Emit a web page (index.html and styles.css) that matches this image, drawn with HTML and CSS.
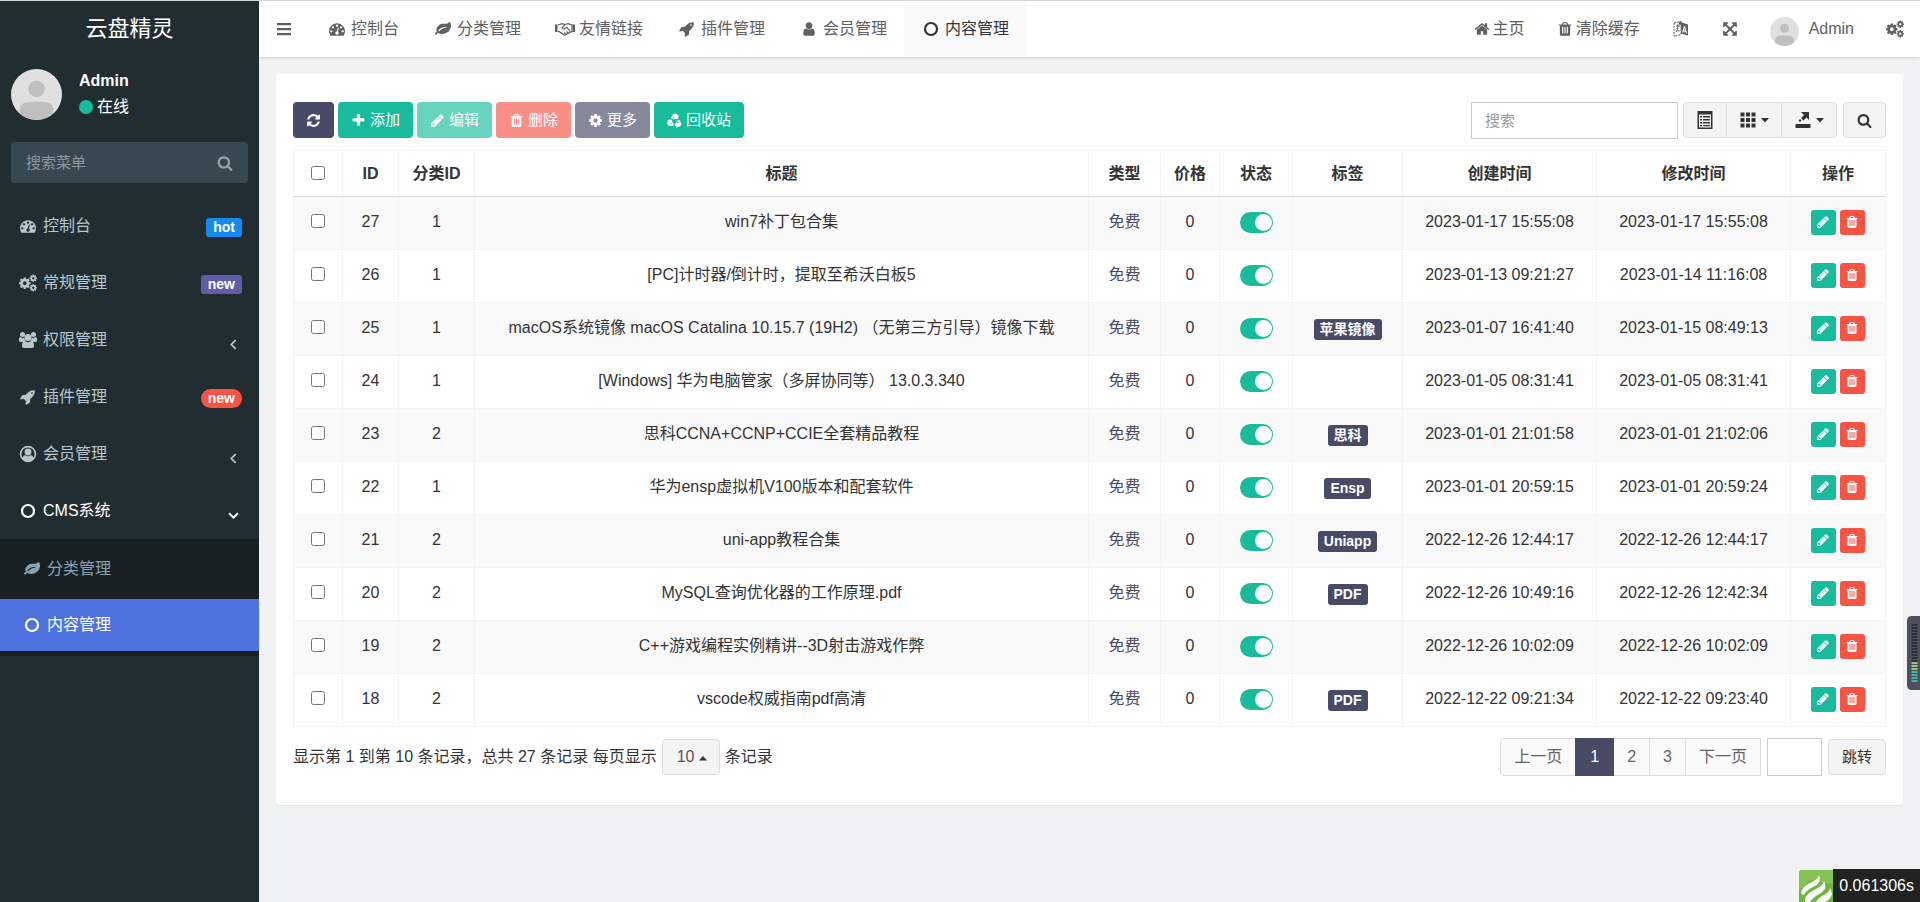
FILE: index.html
```html
<!DOCTYPE html>
<html lang="zh-CN">
<head>
<meta charset="utf-8">
<title>云盘精灵 - 内容管理</title>
<link rel="stylesheet" href="styles.css">
</head>
<body>
<svg class="sprite" aria-hidden="true">
  <symbol id="dash" viewBox="0 0 1792 1792"><path d="M384 1152q0-53-37.500-90.500t-90.500-37.500-90.500 37.500-37.500 90.500 37.500 90.500 90.500 37.500 90.500-37.500 37.500-90.500zm192-448q0-53-37.500-90.500t-90.500-37.500-90.500 37.500-37.500 90.500 37.500 90.500 90.500 37.500 90.500-37.500 37.500-90.500zm428 481l101-382q6-26-7.500-48.500t-38.500-29.500-48 6.500-30 39.500l-101 382q-60 5-107 43.500t-63 98.500q-20 77 20 146t117 89 146-20 89-117q16-60-6-117t-72-91zm660-33q0-53-37.500-90.500t-90.500-37.500-90.500 37.500-37.500 90.500 37.500 90.500 90.500 37.500 90.500-37.500 37.500-90.500zm-640-640q0-53-37.500-90.500t-90.500-37.500-90.500 37.500-37.500 90.500 37.500 90.500 90.500 37.500 90.500-37.500 37.500-90.500zm448 192q0-53-37.500-90.500t-90.500-37.500-90.500 37.500-37.500 90.500 37.500 90.500 90.500 37.500 90.500-37.500 37.500-90.500zm320 448q0 261-141 483-19 29-54 29h-1402q-35 0-54-29-141-221-141-483 0-182 71-348t191-286 286-191 348-71 348 71 286 191 191 286 71 348z"/></symbol>
  <symbol id="leaf" viewBox="0 0 1792 1792"><path d="M1280 704q0-26-19-45t-45-19q-172 0-318 49.500t-259.500 134-235.500 219.500q-19 21-19 45 0 26 19 45t45 19q24 0 45-19 27-24 74-71t67-66q137-124 268.500-176t313.500-52q26 0 45-19t19-45zm512-198q0 95-20 193-46 224-184.500 383t-357.500 268q-214 108-438 108-148 0-286-47-15-5-88-42t-96-37q-16 0-39.500 32t-45 70-52.500 70-60 32q-43 0-63.500-17.500t-45.500-59.500q-2-4-6-11t-5.500-10-3-9.500-1.500-13.500q0-35 31-73.500t68-65.500 68-56 31-48q0-4-14-38t-16-44q-9-51-9-104 0-115 43.500-220t119-184.500 170.500-139 204-95.500q55-18 145-25.500t179.500-9 178.500-6 163.500-24 113.500-56.500l29.500-29.500 29.500-28 27-20 36.500-16 43.500-4.500q39 0 70.500 46t47.500 112 24 124 8 96z"/></symbol>
  <symbol id="rocket" viewBox="0 0 1792 1792"><path d="M1440 448q0-40-28-68t-68-28-68 28-28 68 28 68 68 28 68-28 28-68zm224-288q0 249-75.500 430.500t-253.500 360.500q-81 80-195 176l-20 379q-2 16-16 26l-384 224q-7 4-16 4-12 0-23-9l-64-64q-13-14-8-32l85-276-281-281-276 85q-3 1-9 1-14 0-23-9l-64-64q-17-19-5-39l224-384q10-14 26-16l379-20q96-114 176-195 188-187 358-258t431-71q14 0 24 9.500t10 22.500z"/></symbol>
  <symbol id="user" viewBox="0 0 1792 1792"><path d="M1536 1399q0 109-62.500 187t-150.500 78h-854q-88 0-150.500-78t-62.500-187q0-85 8.500-160.500t31.500-152 58.500-131 94-89 134.500-34.500q131 128 313 128t313-128q76 0 134.500 34.500t94 89 58.500 131 31.500 152 8.500 160.500zm-256-887q0 159-112.500 271.500t-271.500 112.500-271.500-112.500-112.500-271.500 112.500-271.500 271.500-112.500 271.500 112.500 112.500 271.500z"/></symbol>
  <symbol id="home" viewBox="0 0 1792 1792"><path d="M1472 992v480q0 26-19 45t-45 19h-384v-384h-256v384h-384q-26 0-45-19t-19-45v-480q0-1 .5-3t.5-3l575-474 575 474q1 2 1 6zm223-69l-62 74q-8 9-21 11h-3q-13 0-21-7l-692-577-692 577q-12 8-24 7-13-2-21-11l-62-74q-8-10-7-23.500t11-21.500l719-599q32-26 76-26t76 26l244 204v-195q0-14 9-23t23-9h192q14 0 23 9t9 23v408l219 182q10 8 11 21.500t-7 23.500z"/></symbol>
  <symbol id="trash" viewBox="0 0 1792 1792"><path d="M704 1376v-704q0-14-9-23t-23-9h-64q-14 0-23 9t-9 23v704q0 14 9 23t23 9h64q14 0 23-9t9-23zm256 0v-704q0-14-9-23t-23-9h-64q-14 0-23 9t-9 23v704q0 14 9 23t23 9h64q14 0 23-9t9-23zm256 0v-704q0-14-9-23t-23-9h-64q-14 0-23 9t-9 23v704q0 14 9 23t23 9h64q14 0 23-9t9-23zm-544-992h448l-48-117q-7-9-17-11h-317q-10 2-17 11zm928 32v64q0 14-9 23t-23 9h-96v948q0 83-47 143.500t-113 60.500h-832q-66 0-113-58.500t-47-141.500v-952h-96q-14 0-23-9t-9-23v-64q0-14 9-23t23-9h309l70-167q15-37 54-63t79-26h320q40 0 79 26t54 63l70 167h309q14 0 23 9t9 23z"/></symbol>
  <symbol id="search" viewBox="0 0 1792 1792"><path d="M1216 832q0-185-131.500-316.500t-316.500-131.500-316.500 131.500-131.500 316.500 131.500 316.500 316.500 131.500 316.500-131.500 131.500-316.500zm512 832q0 52-38 90t-90 38q-54 0-90-38l-343-342q-179 124-399 124-143 0-273.500-55.500t-225-150-150-225-55.500-273.500 55.500-273.500 150-225 225-150 273.500-55.500 273.500 55.500 225 150 150 225 55.500 273.500q0 220-124 399l343 343q37 37 37 90z"/></symbol>
  <symbol id="cog" viewBox="0 0 1792 1792"><path d="M1152 896q0-106-75-181t-181-75-181 75-75 181 75 181 181 75 181-75 75-181zm512-109v222q0 12-8 23t-20 13l-185 28q-19 54-39 91 35 50 107 138 10 12 10 25t-9 23q-27 37-99 108t-94 71q-12 0-26-9l-138-108q-44 23-91 38-16 136-29 186-7 28-36 28h-222q-14 0-24.500-8.500t-11.500-21.500l-28-184q-49-16-90-37l-141 107q-10 9-25 9-14 0-25-11-126-114-165-168-7-10-7-23 0-12 8-23 15-21 51-66.500t54-70.500q-27-50-41-99l-183-27q-13-2-21-12.500t-8-23.500v-222q0-12 8-23t19-13l186-28q14-46 39-92-40-57-107-138-10-12-10-24 0-10 9-23 26-36 98.500-107.500t94.500-71.500q13 0 26 10l138 107q44-23 91-38 16-136 29-186 7-28 36-28h222q14 0 24.500 8.500t11.500 21.500l28 184q49 16 90 37l142-107q9-9 24-9 13 0 25 10 129 119 165 170 7 8 7 22 0 12-8 23-15 21-51 66.500t-54 70.500q26 50 41 98l183 28q13 2 21 12.500t8 23.500z"/></symbol>
  <symbol id="cogs" viewBox="0 0 18 18"><use href="#cog" x="-1" y="2.500" width="13.500" height="13.500"/><use href="#cog" x="10" y="0" width="8.500" height="8.500"/><use href="#cog" x="10" y="9.500" width="8.500" height="8.500"/></symbol>
  <symbol id="refresh" viewBox="0 0 1792 1792"><path d="M1639 1056q0 5-1 7-64 268-268 434.500t-478 166.500q-146 0-282.500-55t-243.500-157l-129 129q-19 19-45 19t-45-19-19-45v-448q0-26 19-45t45-19h448q26 0 45 19t19 45-19 45l-137 137q71 66 161 102t187 36q134 0 250-65t186-179q11-17 53-117 8-23 30-23h192q13 0 22.500 9.500t9.500 22.500zm25-800v448q0 26-19 45t-45 19h-448q-26 0-45-19t-19-45 19-45l138-138q-148-137-349-137-134 0-250 65t-186 179q-11 17-53 117-8 23-30 23h-199q-13 0-22.500-9.500t-9.500-22.500v-7q65-268 270-434.500t480-166.500q146 0 284 55.500t245 156.500l130-129q19-19 45-19t45 19 19 45z"/></symbol>
  <symbol id="plus" viewBox="0 0 1792 1792"><path d="M1600 736v192q0 40-28 68t-68 28h-416v416q0 40-28 68t-68 28h-192q-40 0-68-28t-28-68v-416h-416q-40 0-68-28t-28-68v-192q0-40 28-68t68-28h416v-416q0-40 28-68t68-28h192q40 0 68 28t28 68v416h416q40 0 68 28t28 68z"/></symbol>
  <symbol id="pencil" viewBox="0 0 1792 1792"><path d="M491 1536l91-91-235-235-91 91v107h128v128h107zm523-928q0-22-22-22-10 0-17 7l-542 542q-7 7-7 17 0 22 22 22 10 0 17-7l542-542q7-7 7-17zm-54-192l416 416-832 832h-416v-416zm683 96q0 53-37 90l-166 166-416-416 166-165q36-38 90-38 53 0 91 38l235 234q37 39 37 91z"/></symbol>
  <symbol id="expand" viewBox="0 0 1792 1792"><path d="M1411 541l-355 355 355 355 144-144q29-31 70-14 39 17 39 59v448q0 26-19 45t-45 19h-448q-42 0-59-40-17-39 14-69l144-144-355-355-355 355 144 144q31 30 14 69-17 40-59 40h-448q-26 0-45-19t-19-45v-448q0-42 40-59 39-17 69 14l144 144 355-355-355-355-144 144q-19 19-45 19-12 0-24-5-40-17-40-59v-448q0-26 19-45t45-19h448q42 0 59 40 17 39-14 69l-144 144 355 355 355-355-144-144q-31-30-14-69 17-40 59-40h448q26 0 45 19t19 45v448q0 42-39 59-13 5-25 5-26 0-45-19z"/></symbol>
  <symbol id="ring" viewBox="0 0 18 18"><circle cx="9" cy="9" r="6" fill="none" stroke="currentColor" stroke-width="2.200"/></symbol>
  <symbol id="bars" viewBox="0 0 18 18"><path d="M2 3h14v2.200H2zM2 8h14v2.200H2zM2 13h14v2.200H2z"/></symbol>
  <symbol id="hands" viewBox="0 0 22 18"><path d="M1 4.500h2.500v7.500H1zM18.500 4.500H21v7.500h-2.500z"/><path d="M4 5l4-1.300 3 .8 3-.8 4 1.300v6.500l-2 1-5 2.500-2-.5-4-3H4M11 4.500L8 8q1.500 2 3.500 0l1.500-.5 3.500 4.500M9 14.500l-2-2M12 14.500l-2-2M14.500 13.500l-2-2" fill="none" stroke="currentColor" stroke-width="1.200"/></symbol>
  <symbol id="group" viewBox="0 0 18 18"><circle cx="3.500" cy="3.500" r="2.500"/><circle cx="14.500" cy="3.500" r="2.500"/><path d="M0 9.500V8q0-2 1.500-2Q4 8 5 6.500q.3 2 1.500 3L4.500 11H2q-2 0-2-1.500zM18 9.500V8q0-2-1.500-2Q14 8 13 6.500q-.3 2-1.500 3l2 1.500H16q2 0 2-1.500z"/><circle cx="9" cy="6.500" r="3.600"/><path d="M5.600 9.800Q9 12.500 12.400 9.800 15 10 15 15q0 2-2 2H5q-2 0-2-2 0-5 2.600-5.200z"/></symbol>
  <symbol id="usercircle" viewBox="0 0 18 18"><circle cx="9" cy="9" r="7.400" fill="none" stroke="currentColor" stroke-width="1.600"/><circle cx="9" cy="7" r="3.400"/><path d="M3 13.500Q4 10.700 6 10q3 2.500 6 0 2 .7 3 3.500Q12.500 17 9 17T3 13.500z"/></symbol>
  <symbol id="recycle" viewBox="0 0 18 18"><g id="arm"><path d="M4.600 6L7 1.800Q7.600.8 8.800.8h1.800q1 0 1.500.8l1.100 1.900 1.500-.8-2 4.900-5-.7 1.500-.9-1.400-2L8 7.800z"/></g><use href="#arm" transform="rotate(120 9 9.800)"/><use href="#arm" transform="rotate(240 9 9.800)"/></symbol>
  <symbol id="lang" viewBox="0 0 18 18"><path d="M2 3l7-1.500v13L2 16.500z" fill="none" stroke="currentColor" stroke-dasharray="2 1"/><path d="M4 6h4M6 4v2q0 4-2 6M4.500 8l3 3.500" fill="none" stroke="currentColor"/><path fill-rule="evenodd" d="M7 1.500l9 3v11l-7-2V5L7 4.500zM12 6l-2 6.500 1.200.3.500-1.500 1.800.5.400 1.500 1.200.3L13 6.300zm.5 2l.7 2.500-1.200-.3z"/></symbol>
  <symbol id="listalt" viewBox="0 0 18 18"><path fill-rule="evenodd" d="M1.500 0h15v18h-15zM3 3.500v13h12v-13z"/><path d="M4 5h2v1.500H4zM7 5h7v1.500H7zM4 8h2v1.500H4zM7 8h7v1.500H7zM4 11h2v1.500H4zM7 11h7v1.500H7zM4 14h2v1.300H4zM7 14h7v1.300H7z"/></symbol>
  <symbol id="grid" viewBox="0 0 18 18"><path d="M1.500 1.500h4v4h-4zM7 1.500h4v4H7zM12.500 1.500h4v4h-4zM1.500 7h4v4h-4zM7 7h4v4H7zM12.500 7h4v4h-4zM1.500 12.500h4v4h-4zM7 12.500h4v4H7zM12.500 12.500h4v4h-4z"/></symbol>
  <symbol id="export" viewBox="0 0 18 18"><path d="M1.500 13h15v4h-15zM7 1h8v8l-2.500-2.500-3 3L7 7l3-3zM7.500 9.500L6 11 4.500 9.500 6 8z"/></symbol>
  <symbol id="caret" viewBox="0 0 8 5"><path d="M0 0h8L4 4.500z"/></symbol>
  <symbol id="caretup" viewBox="0 0 8 5"><path d="M0 4.500h8L4 0z"/></symbol>
  <symbol id="left" viewBox="0 0 10 10"><path d="M7 1L3 5l4 4" fill="none" stroke="currentColor" stroke-width="1.600"/></symbol>
  <symbol id="down" viewBox="0 0 10 10"><path d="M1 3l4 4 4-4" fill="none" stroke="currentColor" stroke-width="1.800"/></symbol>
  <symbol id="avatar" viewBox="0 0 50 50"><circle cx="25" cy="25" r="25" fill="#e0e0e1"/><circle cx="25" cy="19.500" r="8" fill="#bfbfc0"/><path d="M8.500 43.500V40q0-8 12-8h9q12 0 12 8v3.500a25 25 0 0 1-33 0z" fill="#bfbfc0"/></symbol>
</svg>

<aside class="sidebar">
  <a class="logo" href="#">云盘精灵</a>
  <div class="user-panel">
    <svg class="avatar-lg"><use href="#avatar"/></svg>
    <div>
      <p class="user-name">Admin</p>
      <p class="user-state"><span class="dot"></span>在线</p>
    </div>
  </div>
  <form class="menu-search">
    <input type="text" placeholder="搜索菜单" aria-label="搜索菜单">
    <button type="button" aria-label="搜索"><svg class="i16"><use href="#search"/></svg></button>
  </form>
  <nav class="menu">
    <a href="#"><span class="fw"><svg class="i16"><use href="#dash"/></svg></span><span>控制台</span><b class="flag hot">hot</b></a>
    <a href="#"><span class="fw"><svg class="i18"><use href="#cogs"/></svg></span><span>常规管理</span><b class="flag purple">new</b></a>
    <a href="#"><span class="fw"><svg class="i18"><use href="#group"/></svg></span><span>权限管理</span><svg class="arrow"><use href="#left"/></svg></a>
    <a href="#"><span class="fw"><svg class="i16"><use href="#rocket"/></svg></span><span>插件管理</span><b class="flag pill">new</b></a>
    <a href="#"><span class="fw"><svg class="i18"><use href="#usercircle"/></svg></span><span>会员管理</span><svg class="arrow"><use href="#left"/></svg></a>
    <a class="open" href="#"><span class="fw"><svg class="i18"><use href="#ring"/></svg></span><span>CMS系统</span><svg class="arrow"><use href="#down"/></svg></a>
    <div class="submenu">
      <a href="#"><span class="fw"><svg class="i16"><use href="#leaf"/></svg></span><span>分类管理</span></a>
      <a class="current" href="#"><span class="fw"><svg class="i18"><use href="#ring"/></svg></span><span>内容管理</span></a>
    </div>
  </nav>
</aside>

<div class="main">
  <header class="topbar">
    <button class="toggle-menu" type="button" aria-label="菜单"><svg class="i18"><use href="#bars"/></svg></button>
    <nav class="tabs">
      <a href="#"><span class="fw"><svg class="i16"><use href="#dash"/></svg></span>控制台</a>
      <a href="#"><span class="fw"><svg class="i16"><use href="#leaf"/></svg></span>分类管理</a>
      <a href="#"><span class="fw"><svg class="i22"><use href="#hands"/></svg></span>友情链接</a>
      <a href="#"><span class="fw"><svg class="i16"><use href="#rocket"/></svg></span>插件管理</a>
      <a href="#"><span class="fw"><svg class="i16"><use href="#user"/></svg></span>会员管理</a>
      <a class="active" href="#"><span class="fw"><svg class="i18"><use href="#ring"/></svg></span>内容管理</a>
    </nav>
    <nav class="tools">
      <a href="#"><svg class="i16"><use href="#home"/></svg>主页</a>
      <a href="#"><svg class="i16"><use href="#trash"/></svg>清除缓存</a>
      <a href="#" aria-label="语言"><svg class="i18"><use href="#lang"/></svg></a>
      <a href="#" aria-label="全屏"><svg class="i16"><use href="#expand"/></svg></a>
      <a class="profile" href="#"><svg class="avatar-sm"><use href="#avatar"/></svg>Admin</a>
      <a href="#" aria-label="设置"><svg class="i18"><use href="#cogs"/></svg></a>
    </nav>
  </header>

  <main class="panel">
    <div class="toolbar">
      <button class="btn navy" type="button" aria-label="刷新"><svg><use href="#refresh"/></svg></button>
      <button class="btn green" type="button"><svg><use href="#plus"/></svg>添加</button>
      <button class="btn green faded" type="button"><svg><use href="#pencil"/></svg>编辑</button>
      <button class="btn red faded" type="button"><svg><use href="#trash"/></svg>删除</button>
      <button class="btn navy faded" type="button"><svg><use href="#cog"/></svg>更多</button>
      <button class="btn green" type="button"><svg><use href="#recycle"/></svg>回收站</button>
      <input class="field search-field" type="text" placeholder="搜索" aria-label="搜索">
      <div class="group">
        <button type="button" aria-label="切换视图"><svg class="i18"><use href="#listalt"/></svg></button>
        <button type="button" aria-label="列"><svg class="i18"><use href="#grid"/></svg><svg class="caret"><use href="#caret"/></svg></button>
        <button type="button" aria-label="导出"><svg class="i18"><use href="#export"/></svg><svg class="caret"><use href="#caret"/></svg></button>
      </div>
      <button class="btn plain" type="button" aria-label="普通搜索"><svg><use href="#search"/></svg></button>
    </div>

    <table class="grid">
      <colgroup><col class="w-check"><col class="w-id"><col class="w-cat"><col><col class="w-type"><col class="w-price"><col class="w-state"><col class="w-tag"><col class="w-time"><col class="w-time"><col class="w-ops"></colgroup>
      <thead><tr><th><input type="checkbox" aria-label="全选"></th><th>ID</th><th>分类ID</th><th>标题</th><th>类型</th><th>价格</th><th>状态</th><th>标签</th><th>创建时间</th><th>修改时间</th><th>操作</th></tr></thead>
      <tbody>
        <tr><td><input type="checkbox" aria-label="选择 27"></td><td>27</td><td>1</td><td>win7补丁包合集</td><td><a href="#">免费</a></td><td>0</td><td><input class="switch" type="checkbox" role="switch" aria-label="状态 27" checked></td><td></td><td>2023-01-17 15:55:08</td><td>2023-01-17 15:55:08</td><td><div class="ops"><button class="green" aria-label="编辑"><svg><use href="#pencil"/></svg></button><button class="red" aria-label="删除"><svg><use href="#trash"/></svg></button></div></td></tr>
        <tr><td><input type="checkbox" aria-label="选择 26"></td><td>26</td><td>1</td><td>[PC]计时器/倒计时，提取至希沃白板5</td><td><a href="#">免费</a></td><td>0</td><td><input class="switch" type="checkbox" role="switch" aria-label="状态 26" checked></td><td></td><td>2023-01-13 09:21:27</td><td>2023-01-14 11:16:08</td><td><div class="ops"><button class="green" aria-label="编辑"><svg><use href="#pencil"/></svg></button><button class="red" aria-label="删除"><svg><use href="#trash"/></svg></button></div></td></tr>
        <tr><td><input type="checkbox" aria-label="选择 25"></td><td>25</td><td>1</td><td>macOS系统镜像 macOS Catalina 10.15.7 (19H2) （无第三方引导）镜像下载</td><td><a href="#">免费</a></td><td>0</td><td><input class="switch" type="checkbox" role="switch" aria-label="状态 25" checked></td><td><span class="tag">苹果镜像</span></td><td>2023-01-07 16:41:40</td><td>2023-01-15 08:49:13</td><td><div class="ops"><button class="green" aria-label="编辑"><svg><use href="#pencil"/></svg></button><button class="red" aria-label="删除"><svg><use href="#trash"/></svg></button></div></td></tr>
        <tr><td><input type="checkbox" aria-label="选择 24"></td><td>24</td><td>1</td><td>[Windows] 华为电脑管家（多屏协同等） 13.0.3.340</td><td><a href="#">免费</a></td><td>0</td><td><input class="switch" type="checkbox" role="switch" aria-label="状态 24" checked></td><td></td><td>2023-01-05 08:31:41</td><td>2023-01-05 08:31:41</td><td><div class="ops"><button class="green" aria-label="编辑"><svg><use href="#pencil"/></svg></button><button class="red" aria-label="删除"><svg><use href="#trash"/></svg></button></div></td></tr>
        <tr><td><input type="checkbox" aria-label="选择 23"></td><td>23</td><td>2</td><td>思科CCNA+CCNP+CCIE全套精品教程</td><td><a href="#">免费</a></td><td>0</td><td><input class="switch" type="checkbox" role="switch" aria-label="状态 23" checked></td><td><span class="tag">思科</span></td><td>2023-01-01 21:01:58</td><td>2023-01-01 21:02:06</td><td><div class="ops"><button class="green" aria-label="编辑"><svg><use href="#pencil"/></svg></button><button class="red" aria-label="删除"><svg><use href="#trash"/></svg></button></div></td></tr>
        <tr><td><input type="checkbox" aria-label="选择 22"></td><td>22</td><td>1</td><td>华为ensp虚拟机V100版本和配套软件</td><td><a href="#">免费</a></td><td>0</td><td><input class="switch" type="checkbox" role="switch" aria-label="状态 22" checked></td><td><span class="tag">Ensp</span></td><td>2023-01-01 20:59:15</td><td>2023-01-01 20:59:24</td><td><div class="ops"><button class="green" aria-label="编辑"><svg><use href="#pencil"/></svg></button><button class="red" aria-label="删除"><svg><use href="#trash"/></svg></button></div></td></tr>
        <tr><td><input type="checkbox" aria-label="选择 21"></td><td>21</td><td>2</td><td>uni-app教程合集</td><td><a href="#">免费</a></td><td>0</td><td><input class="switch" type="checkbox" role="switch" aria-label="状态 21" checked></td><td><span class="tag">Uniapp</span></td><td>2022-12-26 12:44:17</td><td>2022-12-26 12:44:17</td><td><div class="ops"><button class="green" aria-label="编辑"><svg><use href="#pencil"/></svg></button><button class="red" aria-label="删除"><svg><use href="#trash"/></svg></button></div></td></tr>
        <tr><td><input type="checkbox" aria-label="选择 20"></td><td>20</td><td>2</td><td>MySQL查询优化器的工作原理.pdf</td><td><a href="#">免费</a></td><td>0</td><td><input class="switch" type="checkbox" role="switch" aria-label="状态 20" checked></td><td><span class="tag">PDF</span></td><td>2022-12-26 10:49:16</td><td>2022-12-26 12:42:34</td><td><div class="ops"><button class="green" aria-label="编辑"><svg><use href="#pencil"/></svg></button><button class="red" aria-label="删除"><svg><use href="#trash"/></svg></button></div></td></tr>
        <tr><td><input type="checkbox" aria-label="选择 19"></td><td>19</td><td>2</td><td>C++游戏编程实例精讲--3D射击游戏作弊</td><td><a href="#">免费</a></td><td>0</td><td><input class="switch" type="checkbox" role="switch" aria-label="状态 19" checked></td><td></td><td>2022-12-26 10:02:09</td><td>2022-12-26 10:02:09</td><td><div class="ops"><button class="green" aria-label="编辑"><svg><use href="#pencil"/></svg></button><button class="red" aria-label="删除"><svg><use href="#trash"/></svg></button></div></td></tr>
        <tr><td><input type="checkbox" aria-label="选择 18"></td><td>18</td><td>2</td><td>vscode权威指南pdf高清</td><td><a href="#">免费</a></td><td>0</td><td><input class="switch" type="checkbox" role="switch" aria-label="状态 18" checked></td><td><span class="tag">PDF</span></td><td>2022-12-22 09:21:34</td><td>2022-12-22 09:23:40</td><td><div class="ops"><button class="green" aria-label="编辑"><svg><use href="#pencil"/></svg></button><button class="red" aria-label="删除"><svg><use href="#trash"/></svg></button></div></td></tr>
      </tbody>
    </table>

    <div class="footer">
      <span>显示第 1 到第 10 条记录，总共 27 条记录 <label for="size">每页显示</label></span>
      <span class="size"><select id="size"><option>10</option><option>25</option><option>50</option></select><svg class="caret"><use href="#caretup"/></svg></span>
      <span>条记录</span>
      <nav class="pages" aria-label="分页"><a href="#">上一页</a><a class="on" href="#">1</a><a href="#">2</a><a href="#">3</a><a href="#">下一页</a></nav>
      <input class="field jump-field" type="text" aria-label="页码">
      <button class="btn plain jump" type="button">跳转</button>
    </div>
  </main>
</div>

<svg class="meter" viewBox="0 0 13 74" aria-hidden="true"><path d="M13 0H5Q0 0 0 5v64q0 5 5 5h8z" fill="#4c515d"/><path d="M7.500 8v38" stroke="#2c3039" stroke-width="6" stroke-dasharray="2 1"/><path d="M7.500 46v9" stroke="#9bc27a" stroke-width="6" stroke-dasharray="2 1"/><path d="M7.500 55v11" stroke="#46b49a" stroke-width="6" stroke-dasharray="2 1"/></svg>
<div class="trace">
  <svg viewBox="0 0 34 32" aria-hidden="true"><path d="M0 3q0-3 3-3h31v32H0z" fill="#70b53c"/><path d="M3 0h31v14L12 10 0 20V3q0-3 3-3z" fill="#83c455"/><path d="M2 23Q3 16 13 12q6-3 7-7 3 7-4 11-9 4-11 9-2 0-3-2zM6 32q-1-7 9-12 9-4 10-9 4 7-3 12-8 4-11 9zM17 32q2-4 8-7 6-3 6-7 3 5 1 9-2 3-6 5z" fill="#fff"/></svg>
  <span>0.061306s</span>
</div>
</body>
</html>
```
FILE: styles.css
```css
* { box-sizing: border-box; }
body {
  margin: 0;
  min-height: 100vh;
  display: flex;
  border-top: 1px solid #d3d6d6;
  background: #f1f2f4;
  color: #333;
  font: 16px/24px "Liberation Sans", "Noto Sans CJK SC", sans-serif;
}
a { color: inherit; text-decoration: none; }
p { margin: 0; }
button, input, select { font: inherit; color: inherit; margin: 0; }
button { border: 0; cursor: pointer; }
svg { display: block; flex: none; fill: currentColor; }
.sprite { position: absolute; width: 0; height: 0; }
.i16 { width: 16px; height: 16px; }
.i18 { width: 18px; height: 18px; }
.i22 { width: 22px; height: 18px; }
.caret { width: 8px; height: 5px; }
.fw { display: flex; flex: none; justify-content: center; align-items: center; width: 20px; }

/* Sidebar */
.sidebar { flex: none; width: 259px; background: #222d32; color: #b8c7ce; }
.logo { display: block; line-height: 56px; text-align: center; font-size: 22px; color: #fff; }
.user-panel { display: flex; gap: 17px; padding: 12px 11px 22px; color: #fff; }
.avatar-lg { width: 51px; height: 51px; }
.user-name { font-weight: bold; }
.user-state { display: flex; align-items: center; gap: 4px; padding-top: 2px; }
.dot { width: 14px; height: 14px; border-radius: 50%; background: #18bc9c; }
.menu-search { display: flex; height: 41px; margin: 0 11px 14px; border-radius: 4px; background: #374850; }
.menu-search input { flex: 1; min-width: 0; padding: 0 15px; border: 0; background: none; font-size: 15px; }
.menu-search input::placeholder { color: #8b979c; opacity: 1; }
.menu-search button { width: 46px; padding: 0 15px; background: none; color: #98a3a8; }
.menu > a { display: flex; align-items: center; gap: 5px; height: 57px; padding: 0 17px 0 18px; }
.menu .open { color: #fff; }
.flag { margin: 4px 0 0 auto; padding: 0 7px; border-radius: 3px; color: #fff; font-size: 14px; line-height: 19px; }
.hot { background: #1688f1; }
.purple { background: #605ca8; }
.pill { background: #f75444; border-radius: 10px; }
.arrow { width: 11px; height: 11px; margin: 10px 3px 0 auto; }
.submenu { display: grid; gap: 4px; padding: 4px 0 5px; background: #182024; color: #8aa4af; }
.submenu a { display: flex; align-items: center; gap: 5px; height: 52px; padding: 0 22px; }
.submenu .current { background: #4e73df; color: #fff; }

/* Top bar */
.main { flex: 1; min-width: 0; }
.topbar { display: flex; height: 56px; padding: 0 16px; background: #fff; color: #606060; box-shadow: 0 1px 3px rgba(0, 0, 0, .15); line-height: 56px; }
.toggle-menu { padding: 0 24px 0 0; background: none; }
.tabs { display: flex; margin-left: -7px; }
.tabs a { display: flex; gap: 4px; padding: 0 17px; white-space: nowrap; }
.tabs .active { background: #fafafa; color: #333; }
.tools { display: flex; align-items: center; margin-left: auto; gap: 32px; }
.tools a { display: flex; align-items: center; gap: 3px; white-space: nowrap; }
.tools .profile { gap: 10px; }
.avatar-sm { width: 29px; height: 29px; margin-top: 4px; }

/* Panel */
.panel { margin: 17px; padding: 28px 17px 29px; border-radius: 4px; background: #fff; box-shadow: 0 1px 1px rgba(0, 0, 0, .06); }
.toolbar { display: flex; gap: 4px; padding-bottom: 11px; }
.btn { display: flex; justify-content: center; align-items: center; gap: 4px; height: 36px; padding: 0 13px; border-radius: 4px; color: #fff; font-size: 15px; }
.btn svg { width: 15px; height: 15px; }
.navy { background: #474b66; }
.green { background: #18bc9c; }
.red { background: #f75444; }
.faded { opacity: .65; }
.plain { min-width: 43px; border: 1px solid #ddd; background: #f4f4f4; color: #333; }
.field { height: 37px; border: 1px solid #ccc; background: #fff; outline: 0; padding: 0 13px; font-size: 15px; }
.field::placeholder { color: #999; opacity: 1; }
.search-field { width: 207px; margin-left: auto; }
.group { display: flex; height: 36px; margin: 0 2px 0 1px; border: 1px solid #ddd; border-radius: 4px; background: #f4f4f4; }
.group button { display: flex; align-items: center; gap: 4px; padding: 0 12px; background: none; }
.group button + button { border-left: 1px solid #ddd; }

/* Table */
.grid { width: 100%; table-layout: fixed; border-collapse: collapse; border: 1px solid #f4f4f4; text-align: center; }
.w-check { width: 49px; }
.w-id { width: 56px; }
.w-cat { width: 76px; }
.w-type { width: 72px; }
.w-price { width: 59px; }
.w-state { width: 73px; }
.w-tag { width: 110px; }
.w-time { width: 194px; }
.w-ops { width: 95px; }
.grid th, .grid td { padding: 0; border: 1px solid #f4f4f4; }
.grid th { height: 46px; border-bottom-color: #ddd; }
.grid td { height: 53px; padding-bottom: 2px; }
.grid tbody tr:nth-child(odd) { background: #f9f9f9; }
.grid td a { color: #474b66; }
.grid input { display: block; width: 14px; height: 14px; margin: 0 auto 2px; }
.grid .switch { position: relative; appearance: none; width: 33px; height: 21px; margin: 0 auto; border-radius: 11px; background: #18bc9c; }
.switch::after { content: ""; position: absolute; top: 2px; right: 1px; width: 17px; height: 17px; border-radius: 50%; background: #fff; }
.tag { display: inline-block; padding: 0 6px; margin-top: 3px; border-radius: 3px; background: #474b66; color: #fff; font-weight: bold; font-size: 14px; line-height: 21px; vertical-align: middle; }
.ops { display: flex; justify-content: center; gap: 4px; }
.ops button { width: 25px; height: 25px; padding: 5px; border-radius: 3px; color: #fff; }
.ops svg { width: 14px; height: 14px; }

/* Footer */
.footer { display: flex; align-items: center; gap: 5px; padding-top: 11px; }
.size { position: relative; }
.size select { appearance: none; display: block; width: 58px; height: 36px; padding: 0 14px; border: 1px solid #ddd; border-radius: 4px; background: #f4f4f4; color: #555; }
.size .caret { position: absolute; right: 13px; top: 17px; pointer-events: none; }
.pages { display: flex; margin: 0 1px 0 auto; border: 1px solid #ddd; border-radius: 4px 0 0 4px; background: #fafafa; color: #666; }
.pages a { padding: 6px 13px; border-left: 1px solid #ddd; }
.pages a:first-child { border-left: 0; }
.pages .on { margin: -1px 0; padding: 7px 15px; background: #474b66; color: #fff; border: 0; }
.pages .on + a { border-left: 0; }
.jump-field { width: 55px; height: 38px; }
.jump { width: 58px; margin-left: 1px; }

/* Overlays */
.meter { position: fixed; right: 0; top: 616px; width: 13px; height: 74px; }
.trace { position: fixed; right: 0; bottom: 0; display: flex; align-items: flex-end; height: 33px; color: #fff; }
.trace svg { width: 34px; height: 32px; }
.trace span { padding: 0 6px; background: #222; line-height: 33px; }
```
